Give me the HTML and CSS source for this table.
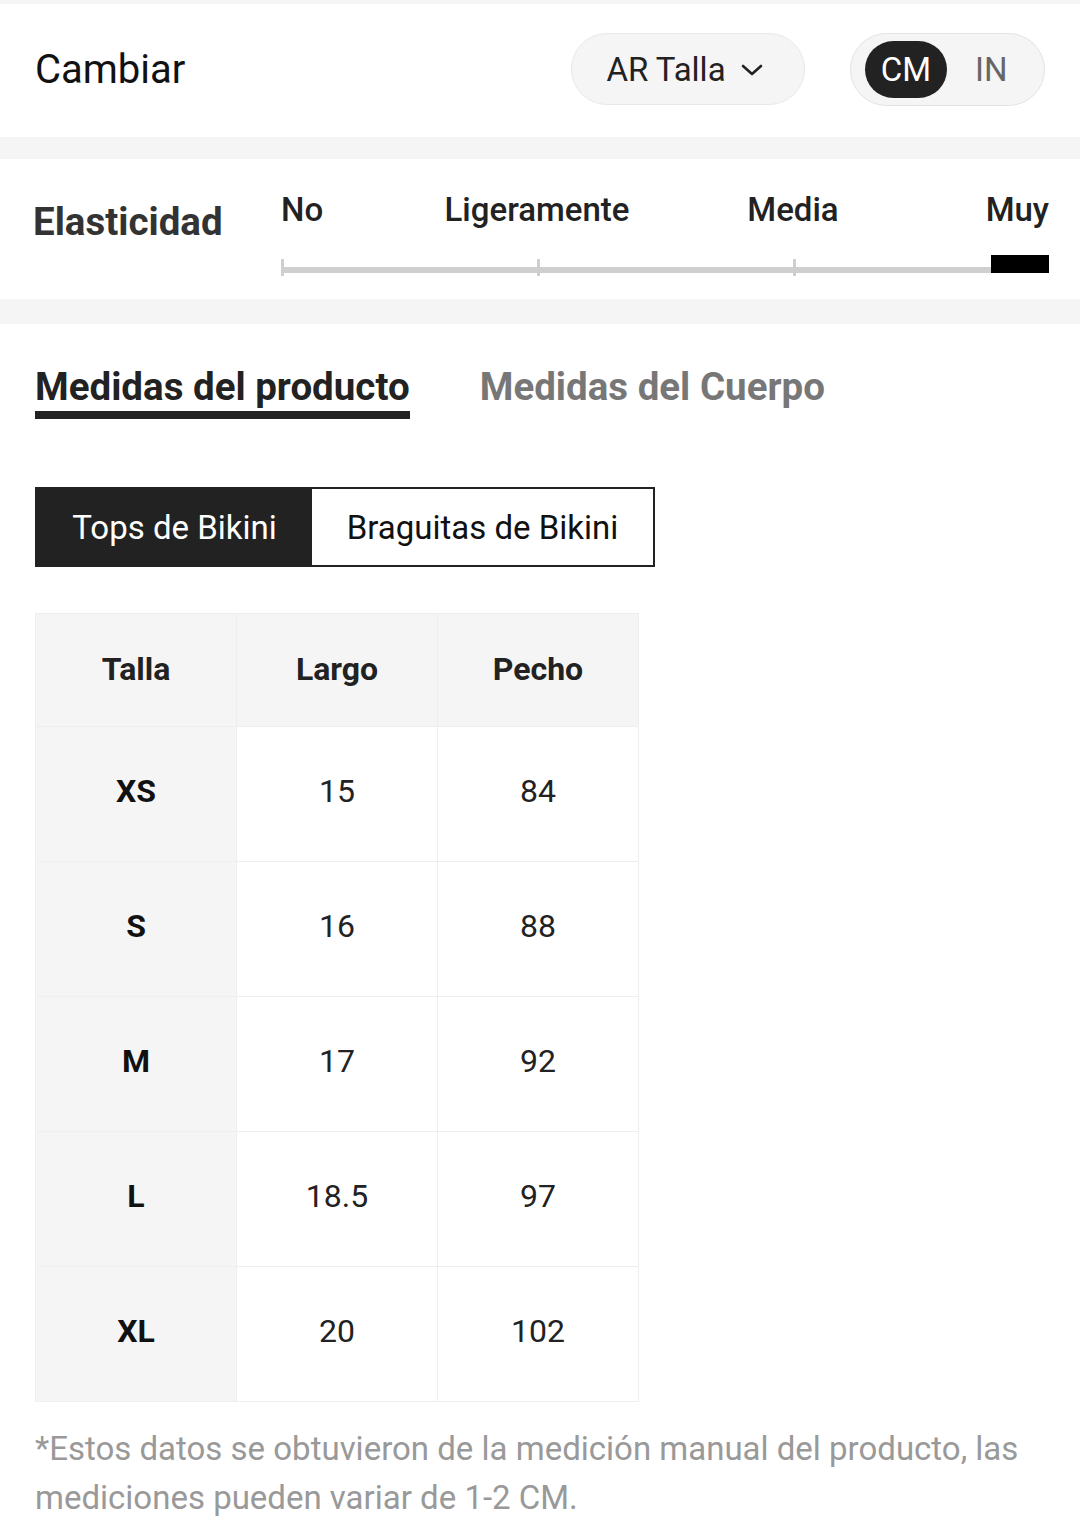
FILE: index.html
```html
<!DOCTYPE html>
<html lang="es">
<head>
<meta charset="utf-8">
<link rel="stylesheet" href="styles.css">
</head>
<body>
<div class="strip strip-top"></div>
<header class="switch-row">
  <div class="switch-title">Cambiar</div>
  <div class="switch-controls">
    <div class="size-pill">
      <span>AR Talla</span>
      <svg class="chev" width="24" height="16" viewBox="0 0 24 16"><path d="M3 4 L12 12 L21 4" fill="none" stroke="#222" stroke-width="2.6" stroke-linecap="round" stroke-linejoin="round"/></svg>
    </div>
    <div class="unit-pill">
      <span class="unit active">CM</span>
      <span class="unit">IN</span>
    </div>
  </div>
</header>
<div class="strip strip-mid"></div>
<section class="elastic">
  <div class="elastic-label">Elasticidad</div>
  <div class="scale">
    <div class="scale-labels">
      <span class="lab lab-no">No</span>
      <span class="lab lab-lig">Ligeramente</span>
      <span class="lab lab-med">Media</span>
      <span class="lab lab-muy">Muy</span>
    </div>
    <div class="track">
      <div class="seg"><i class="tick"></i><i class="line"></i></div>
      <div class="seg"><i class="tick"></i><i class="line"></i></div>
      <div class="seg"><i class="tick"></i><i class="line"></i><i class="knob"></i></div>
    </div>
  </div>
</section>
<div class="strip strip-bottom"></div>
<main class="measures">
  <nav class="tabs">
    <span class="tab active">Medidas del producto</span>
    <span class="tab">Medidas del Cuerpo</span>
  </nav>
  <div class="segmented">
    <span class="segbtn on">Tops de Bikini</span>
    <span class="segbtn">Braguitas de Bikini</span>
  </div>
  <table class="sizes">
    <thead>
      <tr><th>Talla</th><th>Largo</th><th>Pecho</th></tr>
    </thead>
    <tbody>
      <tr><th>XS</th><td>15</td><td>84</td></tr>
      <tr><th>S</th><td>16</td><td>88</td></tr>
      <tr><th>M</th><td>17</td><td>92</td></tr>
      <tr><th>L</th><td>18.5</td><td>97</td></tr>
      <tr><th>XL</th><td>20</td><td>102</td></tr>
    </tbody>
  </table>
  <p class="note">*Estos datos se obtuvieron de la medición manual del producto, las mediciones pueden variar de 1-2 CM.</p>
</main>
</body>
</html>
```

FILE: styles.css
```css
* { box-sizing: border-box; }
html, body { margin: 0; padding: 0; background: #fff; }
body {
  font-family: Roboto, "Liberation Sans", sans-serif;
  color: #222;
  width: 1080px;
}
.strip { background: #f5f5f5; }
.strip-top { height: 4px; }
.strip-mid { height: 22px; }
.strip-bottom { height: 25px; }

.switch-row {
  height: 133px;
  display: flex;
  align-items: center;
  justify-content: space-between;
  padding: 0 35px;
}
.switch-title {
  font-size: 40px;
  color: #111;
  margin-top: -2px;
}
.switch-controls {
  display: flex;
  align-items: center;
  gap: 45px;
  margin-top: -3px;
}
.size-pill {
  width: 234px;
  height: 72px;
  border-radius: 36px;
  background: #f5f5f5;
  border: 1px solid #e8e8e8;
  display: flex;
  align-items: center;
  justify-content: center;
  gap: 14px;
  font-size: 33px;
  color: #222;
  padding-right: 6px;
}
.chev { display: block; margin-top: 2px; }
.unit-pill {
  width: 195px;
  height: 73px;
  border-radius: 37px;
  background: #f5f5f5;
  border: 1px solid #e3e3e3;
  display: flex;
  align-items: center;
  padding: 0 14px;
}
.unit {
  flex-shrink: 0;
  font-size: 33px;
  color: #666;
  height: 57px;
  display: flex;
  align-items: center;
  justify-content: center;
  padding: 0 28px;
}
.unit.active {
  background: #222;
  color: #fff;
  border-radius: 29px;
  width: 82px;
  padding: 0;
}

.elastic {
  height: 140px;
  display: flex;
  padding: 31px 31px 0 33px;
}
.elastic-label {
  width: 248px;
  font-size: 38.5px;
  font-weight: 700;
  color: #333;
  line-height: 46px;
  padding-top: 9px;
}
.scale { flex: 1; }
.scale-labels {
  display: grid;
  grid-template-columns: repeat(6, 1fr);
  font-size: 33px;
  font-weight: 500;
  line-height: 40px;
  color: #222;
}
.lab-no { grid-column: 1; justify-self: start; }
.lab-lig { grid-column: 2 / span 2; justify-self: center; }
.lab-med { grid-column: 4 / span 2; justify-self: center; }
.lab-muy { grid-column: 6; justify-self: end; }
.track {
  margin-top: 25px;
  height: 21px;
  display: grid;
  grid-template-columns: repeat(3, 1fr);
}
.seg {
  display: flex;
  align-items: flex-end;
}
.tick {
  display: block;
  width: 3px;
  height: 17px;
  background: #cfcfcf;
}
.line {
  display: block;
  flex: 1;
  height: 6px;
  margin-bottom: 3px;
  background: #cfcfcf;
}
.knob {
  display: block;
  width: 58px;
  height: 18px;
  margin-bottom: 3px;
  background: #000;
}

.measures { padding: 40px 35px 0; }
.tabs {
  display: flex;
  gap: 70px;
  align-items: flex-start;
}
.tab {
  font-size: 38.5px;
  font-weight: 700;
  line-height: 46px;
  color: #777;
  padding-bottom: 1px;
  border-bottom: 8px solid transparent;
}
.tab.active {
  color: #222;
  border-bottom-color: #222;
}
.segmented {
  margin-top: 68px;
  display: flex;
  width: 620px;
  height: 80px;
  border: 2px solid #222;
}
.segbtn {
  display: flex;
  align-items: center;
  justify-content: center;
  font-size: 33px;
  color: #111;
  flex: 1;
}
.segbtn.on {
  flex: 0 0 275px;
  background: #222;
  color: #fff;
}
.sizes {
  margin-top: 46px;
  border-collapse: collapse;
  width: 604px;
  table-layout: fixed;
}
.sizes th, .sizes td {
  border: 1px solid #eeeeee;
  text-align: center;
  font-size: 32px;
  height: 135px;
  width: 201px;
  padding: 0 0 6px;
}
.sizes thead th {
  height: 113px;
  background: #f5f5f5;
  font-weight: 700;
  color: #222;
  padding-bottom: 2px;
}
.sizes tbody th {
  background: #f5f5f5;
  font-weight: 700;
  color: #111;
  border-top-color: #f0f0f0;
  border-bottom-color: #f0f0f0;
}
.sizes td {
  font-weight: 400;
  color: #222;
}
.note {
  margin: 22px 0 0;
  font-size: 33px;
  line-height: 49px;
  color: #999;
}
```
